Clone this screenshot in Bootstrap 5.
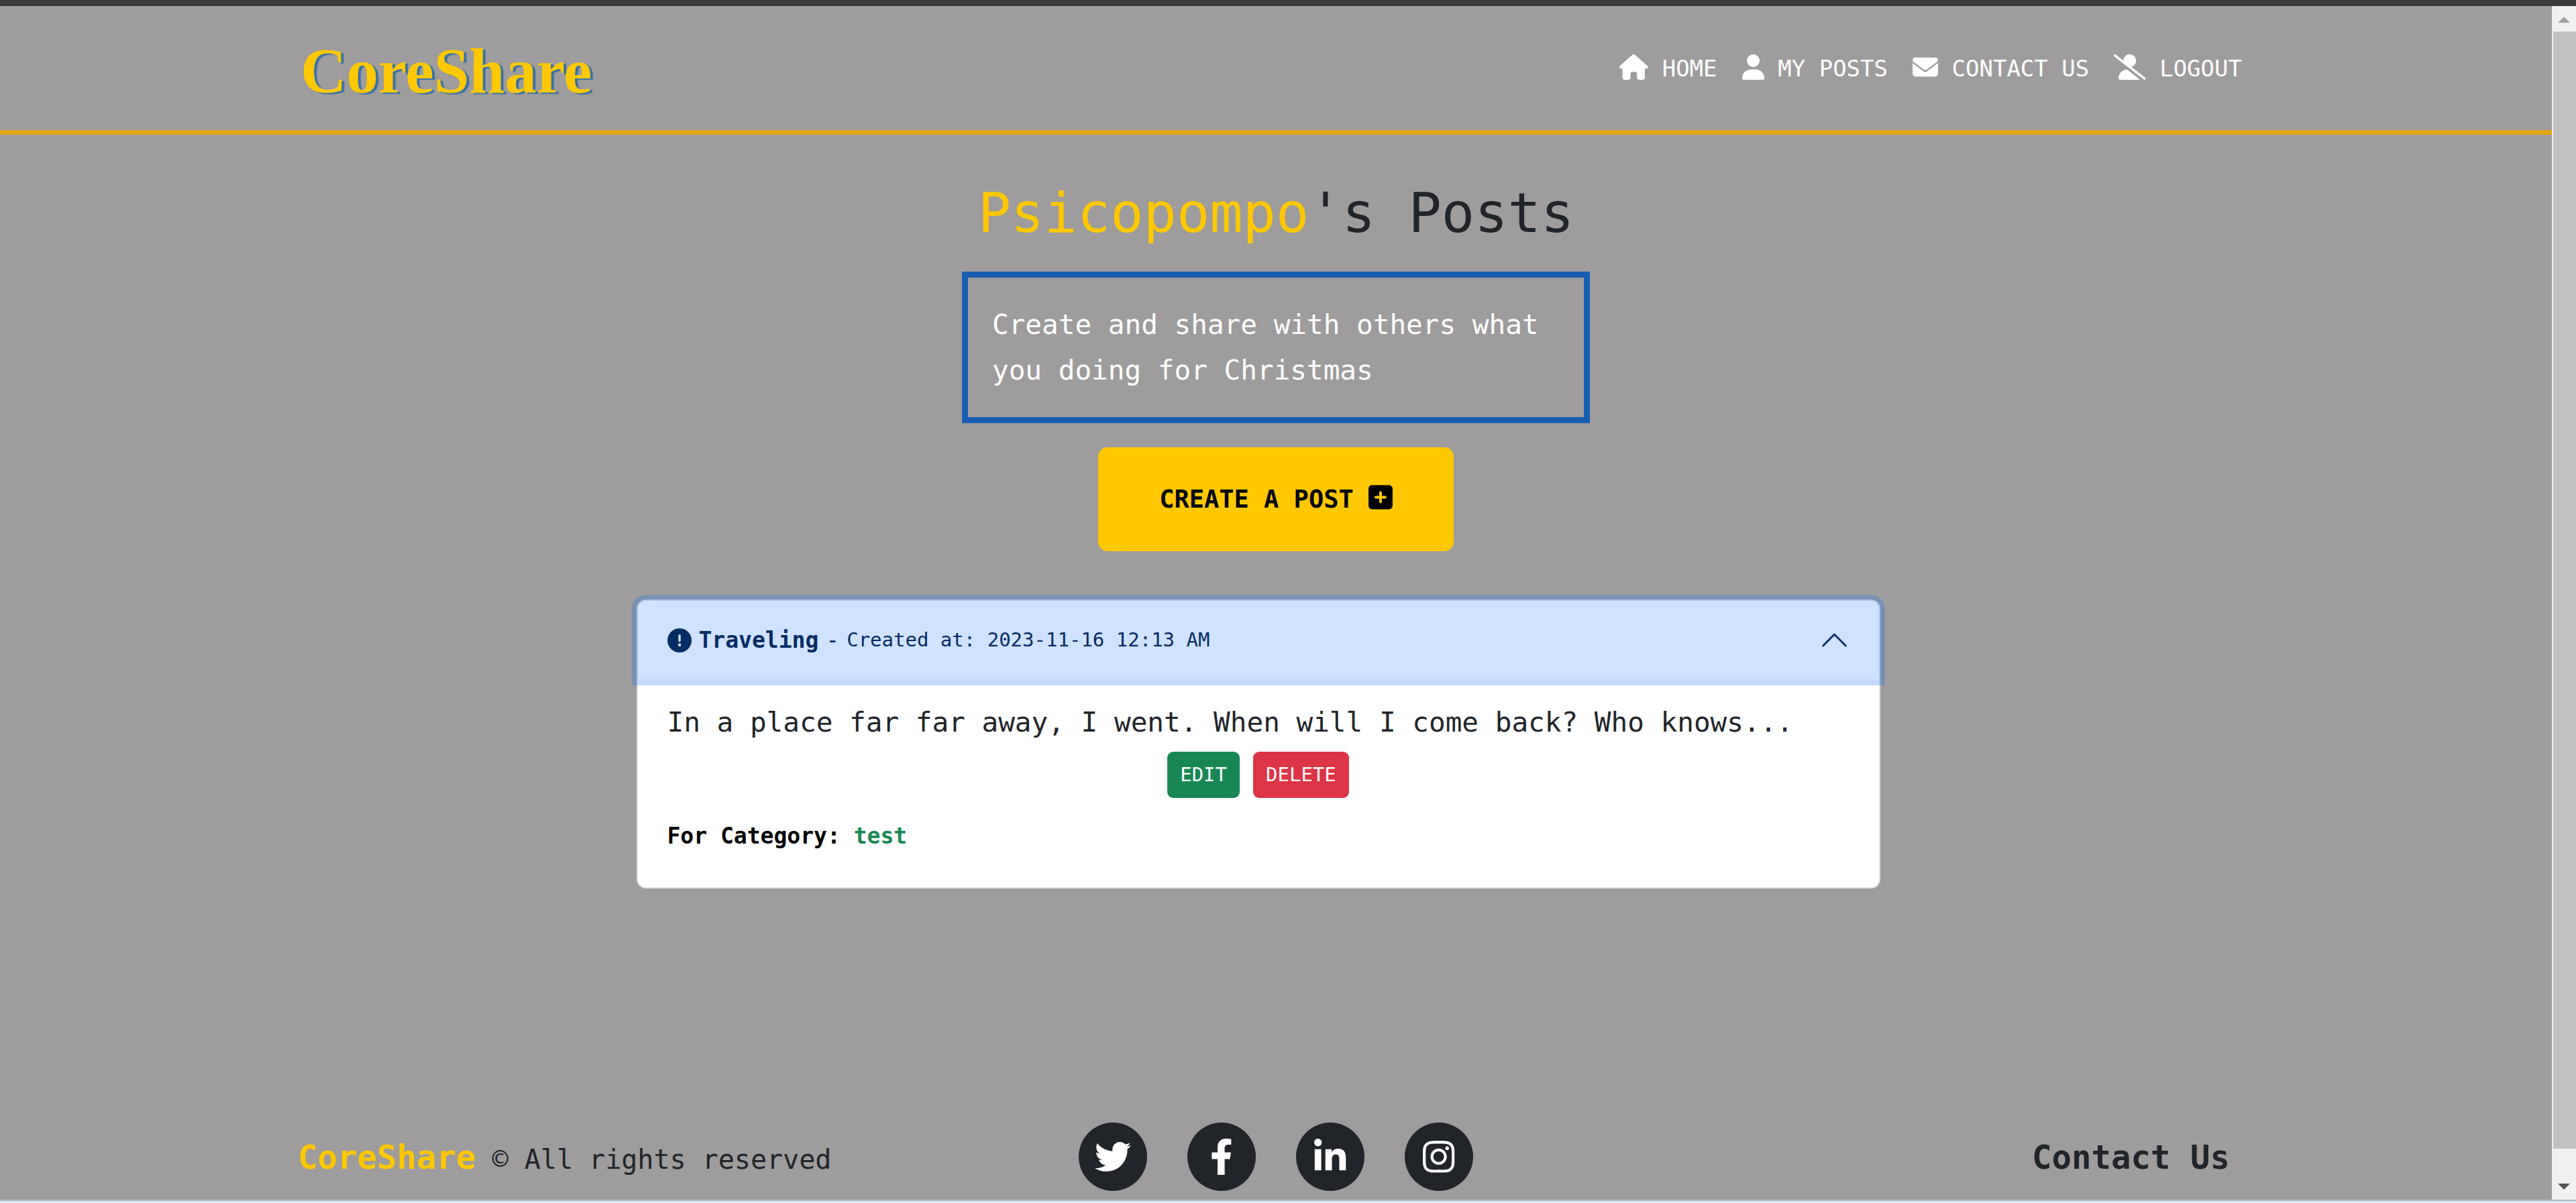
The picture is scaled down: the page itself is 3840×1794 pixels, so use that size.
<!DOCTYPE html>
<html lang="en">
<head>
<meta charset="utf-8">
<meta name="viewport" content="width=device-width, initial-scale=1">
<title>CoreShare - My Posts</title>
<link rel="stylesheet" href="https://cdn.jsdelivr.net/npm/bootstrap@5.3.0/dist/css/bootstrap.min.css">
<style>
  :root { --gold: #ffc802; --ink: #212529; --page: #9e9c9c; }
  body { font-family: "DejaVu Sans Mono", monospace; color: var(--ink); background: var(--page); }
  .window-top { height: 9px; background: #3b3b3b; }
  .window-bottom { height: 5px; background: #dde9f1; border-top: 2px solid #b0b8bd; }
  .scroll-rail { width: 36px; background: #f0f0f0; }
  .scroll-rail svg { width: 18px; height: 9px; display: block; }
  .rail-up { height: 38px; padding-top: 2px; }
  .rail-thumb { margin-left: 2px; background: #c1c1c1; }
  .rail-down { height: 76px; padding-top: 52px; }
  .site-wrap { max-width: 2970px; padding-left: 27px; padding-right: 27px; }
  .site-header { border-bottom: 7px solid #e0a716; padding: 0; }
  .site-header .site-wrap { min-height: 185px; }
  .brand-text { font: bold 95px/110px "Liberation Serif", serif; color: var(--gold); text-shadow: 4px 2px 1px #3672a8; padding: 8px 0 0 4px; }
  .brand-text:hover { color: var(--gold); }
  .menu-list { gap: 37px; padding-right: 18px; }
  .menu-list .nav-link { font-size: 34px; line-height: 50px; color: #fff; padding: 0; white-space: nowrap; }
  .glyph { height: 38px; vertical-align: -5px; fill: currentColor; }
  .page-title { font-size: 82px; line-height: 98px; margin: 68px 0 38px; font-weight: 400; }
  .gold { color: var(--gold); }
  .intro-box { max-width: 936px; border: 9px solid #1a5eb3; padding: 36px; font-size: 41px; line-height: 68px; color: #fff; }
  .create-btn { margin-top: 36px; padding: 50px 91px; font-size: 37px; line-height: 55px; font-weight: 700; border: 0; border-radius: 14px;
    --bs-btn-bg: #ffc802; --bs-btn-color: #000; }
  .create-btn .glyph { height: 41px; }
  .post-area { padding-top: 72px; padding-right: 53px; }
  .accordion { width: 100%; max-width: 1854px; --bs-accordion-border-width: 2px; --bs-accordion-border-radius: 14px; --bs-accordion-inner-border-radius: 12px;
    --bs-accordion-btn-padding-x: 44px; --bs-accordion-btn-padding-y: 33px; --bs-accordion-btn-icon-width: 45px;
    --bs-accordion-body-padding-x: 44px; --bs-accordion-border-color: #dee2e6; --bs-accordion-bg: #fff;
    --bs-accordion-btn-active-icon: url("data:image/svg+xml,%3csvg xmlns='http://www.w3.org/2000/svg' viewBox='0 0 16 16' fill='%23052c65'%3e%3cpath fill-rule='evenodd' d='M1.646 4.646a.5.5 0 0 1 .708 0L8 10.293l5.646-5.647a.5.5 0 0 1 .708.708l-6 6a.5.5 0 0 1-.708 0l-6-6a.5.5 0 0 1 0-.708z'/%3e%3c/svg%3e"); }
  .accordion-button { gap: 11px; font-size: 33px; line-height: 51px; }
  .accordion-button:not(.collapsed) { color: #052c65; background: #cfe2ff; box-shadow: 0 0 0 9px rgba(13,110,253,.25); z-index: 3; position: relative; }
  .accordion-button .glyph { height: 36px; }
  .created-at { font-size: 29px; }
  .accordion-body { padding-top: 30px; padding-bottom: 51px; }
  .post-text { font-size: 41px; line-height: 68px; margin: 0 0 10px; }
  .post-actions { gap: 20px; margin-bottom: 32px; }
  .post-actions .btn { font-size: 29px; line-height: 45px; padding: 12px 19px; border: 0; border-radius: 9px; }
  .post-category { font-size: 33px; line-height: 50px; color: #000; }
  .site-footer { padding-bottom: 13px; padding-top: 60px; }
  .foot-line { line-height: 70px; padding-top: 14px; }
  .foot-brand { font-size: 49px; font-weight: 700; color: var(--gold); }
  .foot-rights { font-size: 40px; }
  .foot-contact { font-size: 49px; font-weight: 700; color: var(--ink); padding-right: 36px; }
  .social-list { gap: 60px; }
  .social-list a { width: 102px; height: 102px; background: var(--ink); color: #fff; }
  .social-list svg { height: 54px; fill: currentColor; }
</style>
</head>
<body class="d-flex flex-column min-vh-100">
<div class="window-top"></div>
<div class="d-flex flex-grow-1">
  <div class="d-flex flex-column flex-grow-1">
    <header class="site-header navbar">
      <div class="site-wrap container-fluid d-flex justify-content-between align-items-center">
        <a class="brand-text text-decoration-none" href="#">CoreShare</a>
        <nav aria-label="Main">
          <ul class="menu-list nav">
            <li><a class="nav-link" href="#"><svg class="glyph" viewBox="0 0 576 512" aria-hidden="true"><path d="M575.8 255.5c0 18-15 32.1-32 32.1h-32l.7 160.2c0 2.7-.2 5.4-.5 8.1V472c0 22.1-17.9 40-40 40H456c-1.1 0-2.2 0-3.3-.1c-1.4 .1-2.8 .1-4.2 .1H416 392c-22.1 0-40-17.9-40-40V448 384c0-17.7-14.3-32-32-32H256c-17.7 0-32 14.3-32 32v64 24c0 22.1-17.9 40-40 40H160 128.1c-1.5 0-3-.1-4.5-.2c-1.2 .1-2.4 .2-3.6 .2H104c-22.1 0-40-17.9-40-40V360c0-.9 0-1.9 .1-2.8V287.6H32c-18 0-32-14-32-32.1c0-9 3-17 10-24L266.4 8c7-7 15-8 22-8s15 2 21 7L564.8 231.5c8 7 12 15 11 24z"/></svg> HOME</a></li>
            <li><a class="nav-link" href="#"><svg class="glyph" viewBox="0 0 448 512" aria-hidden="true"><path d="M224 256A128 128 0 1 0 224 0a128 128 0 1 0 0 256zm-45.7 48C79.8 304 0 383.8 0 482.3C0 498.7 13.3 512 29.7 512H418.3c16.4 0 29.7-13.3 29.7-29.7C448 383.8 368.2 304 269.7 304H178.3z"/></svg> MY POSTS</a></li>
            <li><a class="nav-link" href="#"><svg class="glyph" viewBox="0 0 512 512" aria-hidden="true"><path d="M48 64C21.5 64 0 85.5 0 112c0 15.1 7.1 29.3 19.2 38.4L236.8 313.6c11.4 8.5 27 8.5 38.4 0L492.8 150.4c12.1-9.1 19.2-23.3 19.2-38.4c0-26.5-21.5-48-48-48H48zM0 176V384c0 35.3 28.7 64 64 64H448c35.3 0 64-28.7 64-64V176L294.4 339.2c-22.8 17.1-54 17.1-76.8 0L0 176z"/></svg> CONTACT US</a></li>
            <li><a class="nav-link" href="#"><svg class="glyph" viewBox="0 0 640 512" aria-hidden="true"><path d="M38.8 5.1C28.4-3.1 13.3-1.2 5.1 9.2S-1.2 34.7 9.2 42.9l592 464c10.4 8.2 25.5 6.3 33.7-4.1s6.3-25.5-4.1-33.7L353.3 251.6C407.9 237 448 187.2 448 128C448 57.3 390.7 0 320 0C250.2 0 193.5 55.8 192 125.2L38.8 5.1zM264.3 304.3C170.5 309.4 96 387.2 96 482.3c0 16.4 13.3 29.7 29.7 29.7H514.3c3.9 0 7.6-.7 11-2.1l-261-205.6z"/></svg> LOGOUT</a></li>
          </ul>
        </nav>
      </div>
    </header>

    <main class="d-flex flex-column align-items-center">
      <h1 class="page-title text-center"><span class="gold">Psicopompo</span>'s Posts</h1>
      <p class="intro-box mb-0">Create and share with others what you doing for Christmas</p>
      <button type="button" class="btn btn-warning create-btn">CREATE A POST <svg class="glyph" viewBox="0 0 448 512" aria-hidden="true"><path d="M64 32C28.7 32 0 60.7 0 96V416c0 35.3 28.7 64 64 64H384c35.3 0 64-28.7 64-64V96c0-35.3-28.7-64-64-64H64zM200 344V280H136c-13.3 0-24-10.7-24-24s10.7-24 24-24h64V168c0-13.3 10.7-24 24-24s24 10.7 24 24v64h64c13.3 0 24 10.7 24 24s-10.7 24-24 24H248v64c0 13.3-10.7 24-24 24s-24-10.7-24-24z"/></svg></button>

      <section class="post-area w-100 d-flex justify-content-center">
        <div class="accordion" id="posts">
          <div class="accordion-item">
            <h2 class="accordion-header">
              <button class="accordion-button" type="button" data-bs-toggle="collapse" data-bs-target="#post-1" aria-expanded="true" aria-controls="post-1">
                <svg class="glyph" viewBox="0 0 512 512" aria-hidden="true"><path d="M256 512A256 256 0 1 0 256 0a256 256 0 1 0 0 512zm0-384c13.3 0 24 10.7 24 24V264c0 13.3-10.7 24-24 24s-24-10.7-24-24V152c0-13.3 10.7-24 24-24zM224 352a32 32 0 1 1 64 0 32 32 0 1 1 -64 0z"/></svg>
                <strong>Traveling</strong><span>-</span><span class="created-at">Created at: 2023-11-16 12:13 AM</span>
              </button>
            </h2>
            <div id="post-1" class="accordion-collapse collapse show" data-bs-parent="#posts">
              <div class="accordion-body">
                <p class="post-text">In a place far far away, I went. When will I come back? Who knows...</p>
                <div class="post-actions d-flex justify-content-center">
                  <button type="button" class="btn btn-success">EDIT</button>
                  <button type="button" class="btn btn-danger">DELETE</button>
                </div>
                <p class="post-category fw-bold mb-0">For Category: <span class="text-success">test</span></p>
              </div>
            </div>
          </div>
        </div>
      </section>
    </main>

    <footer class="site-footer mt-auto">
      <div class="site-wrap container-fluid">
        <div class="row g-0 align-items-center">
          <div class="col foot-line"><span class="foot-brand">CoreShare</span><span class="foot-rights"> © All rights reserved</span></div>
          <div class="col-auto social-list d-flex">
            <a class="rounded-circle d-flex align-items-center justify-content-center" href="#" aria-label="Twitter"><svg viewBox="0 0 512 512"><path d="M459.37 151.716c.325 4.548.325 9.097.325 13.645 0 138.72-105.583 298.558-298.558 298.558-59.452 0-114.68-17.219-161.137-47.106 8.447.974 16.568 1.299 25.34 1.299 49.055 0 94.213-16.568 130.274-44.832-46.132-.975-84.792-31.188-98.112-72.772 6.498.974 12.995 1.624 19.818 1.624 9.421 0 18.843-1.3 27.614-3.573-48.081-9.747-84.143-51.98-84.143-102.985v-1.299c13.969 7.797 30.214 12.67 47.431 13.319-28.264-18.843-46.781-51.005-46.781-87.391 0-19.492 5.197-37.36 14.294-52.954 51.655 63.675 129.3 105.258 216.365 109.807-1.624-7.797-2.599-15.918-2.599-24.04 0-57.828 46.782-104.934 104.934-104.934 30.213 0 57.502 12.67 76.67 33.137 23.715-4.548 46.456-13.32 66.599-25.34-7.798 24.366-24.366 44.833-46.132 57.827 21.117-2.273 41.584-8.122 60.426-16.243-14.292 20.791-32.161 39.308-52.628 54.253z"/></svg></a>
            <a class="rounded-circle d-flex align-items-center justify-content-center" href="#" aria-label="Facebook"><svg viewBox="0 0 320 512"><path d="M279.14 288l14.22-92.66h-88.91v-60.13c0-25.35 12.42-50.06 52.24-50.06h40.42V6.26S260.43 0 225.36 0c-73.22 0-121.08 44.38-121.08 124.72v70.62H22.89V288h81.39v224h100.17V288z"/></svg></a>
            <a class="rounded-circle d-flex align-items-center justify-content-center" href="#" aria-label="LinkedIn"><svg viewBox="0 0 448 512"><path d="M100.28 448H7.4V148.9h92.88zM53.79 108.1C24.09 108.1 0 83.5 0 53.8a53.79 53.79 0 0 1 107.58 0c0 29.7-24.1 54.3-53.79 54.3zM447.9 448h-92.68V302.4c0-34.7-.7-79.2-48.29-79.2-48.29 0-55.69 37.7-55.69 76.7V448h-92.78V148.9h89.08v40.8h1.3c12.4-23.5 42.69-48.3 87.88-48.3 94 0 111.28 61.9 111.28 142.3V448z"/></svg></a>
            <a class="rounded-circle d-flex align-items-center justify-content-center" href="#" aria-label="Instagram"><svg viewBox="0 0 448 512"><path d="M224.1 141c-63.6 0-114.9 51.3-114.9 114.9s51.3 114.9 114.9 114.9S339 319.5 339 255.9 287.7 141 224.1 141zm0 189.6c-41.1 0-74.7-33.5-74.7-74.7s33.5-74.7 74.7-74.7 74.7 33.5 74.7 74.7-33.6 74.7-74.7 74.7zm146.4-194.3c0 14.9-12 26.8-26.8 26.8-14.9 0-26.8-12-26.8-26.8s12-26.8 26.8-26.8 26.8 12 26.8 26.8zm76.1 27.2c-1.7-35.9-9.9-67.7-36.2-93.9-26.2-26.2-58-34.4-93.9-36.2-37-2.1-147.9-2.1-184.9 0-35.8 1.7-67.6 9.9-93.9 36.1s-34.4 58-36.2 93.9c-2.1 37-2.1 147.9 0 184.9 1.7 35.9 9.9 67.7 36.2 93.9s58 34.4 93.9 36.2c37 2.1 147.9 2.1 184.9 0 35.9-1.7 67.7-9.9 93.9-36.2 26.2-26.2 34.4-58 36.2-93.9 2.1-37 2.1-147.8 0-184.8zM398.8 388c-7.8 19.6-22.9 34.7-42.6 42.6-29.5 11.7-99.5 9-132.1 9s-102.7 2.6-132.1-9c-19.6-7.8-34.7-22.9-42.6-42.6-11.7-29.5-9-99.5-9-132.1s-2.6-102.7 9-132.1c7.8-19.6 22.9-34.7 42.6-42.6 29.5-11.7 99.5-9 132.1-9s102.7-2.6 132.1 9c19.6 7.8 34.7 22.9 42.6 42.6 11.7 29.5 9 99.5 9 132.1s2.7 102.7-9 132.1z"/></svg></a>
          </div>
          <div class="col foot-line text-end"><a class="foot-contact text-decoration-none" href="#">Contact Us</a></div>
        </div>
      </div>
    </footer>
  </div>

  <div class="scroll-rail d-flex flex-column flex-shrink-0" aria-hidden="true">
    <div class="rail-up d-flex align-items-center justify-content-center"><svg viewBox="0 0 18 9"><path d="M0 9L9 0l9 9z" fill="#a3a0a0"/></svg></div>
    <div class="rail-thumb flex-grow-1"></div>
    <div class="rail-down d-flex justify-content-center"><svg viewBox="0 0 18 9"><path d="M0 0h18L9 9z" fill="#505050"/></svg></div>
  </div>
</div>
<div class="window-bottom"></div>
<script src="https://cdn.jsdelivr.net/npm/bootstrap@5.3.0/dist/js/bootstrap.bundle.min.js"></script>
</body>
</html>
